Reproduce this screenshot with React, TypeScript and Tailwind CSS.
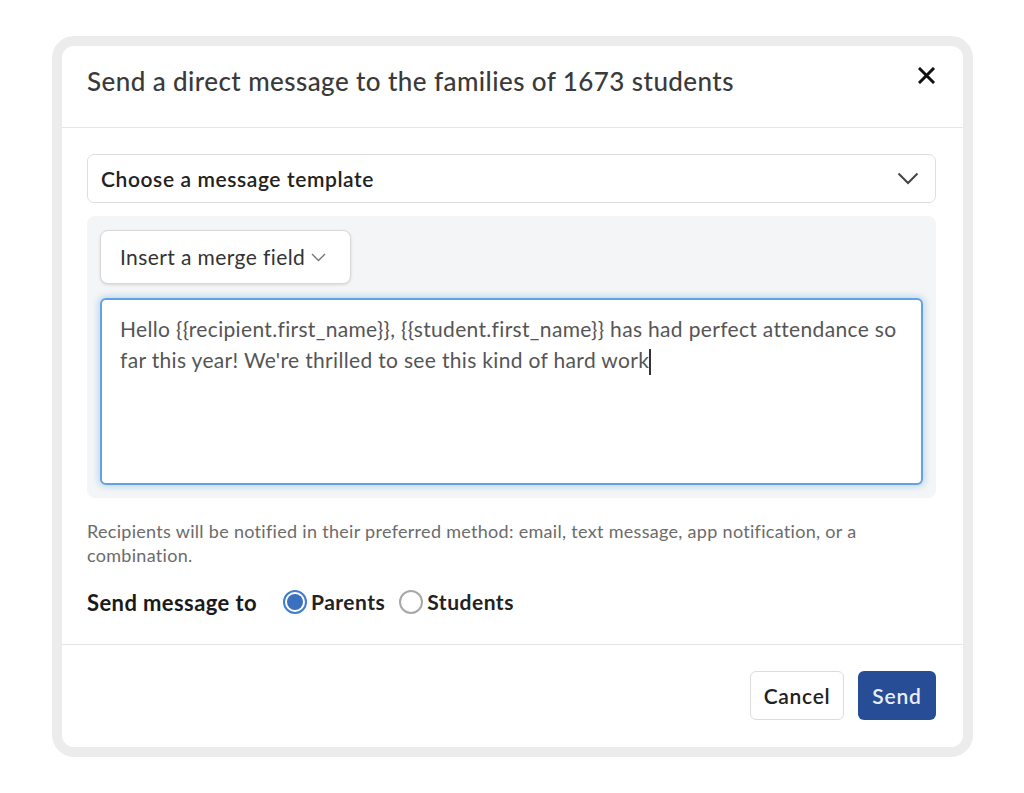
/** Modal: send direct message to families */
export default function App() {
  return (
    <div className="min-h-[793px] w-[1024px] bg-white pt-[36px] pl-[52px]" style={{ fontFamily: "Lato, 'Open Sans', sans-serif" }}>
      <div className="w-[921px] h-[721px] rounded-[22px] border-[10px] border-[#ececec] bg-[#ececec]">
        <div className="h-full rounded-[12px] bg-white flex flex-col overflow-hidden">
          {/* Header */}
          <div className="h-[82px] flex items-start justify-between pl-[25px] pr-[28px] pt-[19px] border-b border-[#e6e6e6] shrink-0">
            <h1 className="text-[26px] leading-[32px] font-medium text-[#3a3a3a] tracking-[0.42px]">
              Send a direct message to the families of 1673 students
            </h1>
            <svg width="17" height="17" viewBox="0 0 17 17" className="mt-[2px]">
              <path d="M2 2 L15 15 M15 2 L2 15" stroke="#111" strokeWidth="3" strokeLinecap="square" />
            </svg>
          </div>

          {/* Body */}
          <div className="pl-[25px] pr-[27px] pt-[26px] pb-[30px] border-b border-[#e6e6e6]">
            <div className="h-[49px] rounded-[7px] border border-[#dedede] flex items-center justify-between pl-[13px] pr-[16px]">
              <span className="text-[21px] font-semibold text-[#222] tracking-[0.6px]">Choose a message template</span>
              <svg width="22" height="13" viewBox="0 0 22 13">
                <polyline points="1.5,1.5 11,11 20.5,1.5" fill="none" stroke="#444" strokeWidth="2" />
              </svg>
            </div>

            <div className="mt-[13px] rounded-[8px] bg-[#f4f5f7] p-[13px] pt-[14px]">
              <div className="w-[251px] h-[54px] rounded-[8px] border border-[#d9d9d9] bg-white shadow-[0_1px_3px_rgba(0,0,0,0.12)] flex items-center pl-[19px] gap-[6px]">
                <span className="text-[21px] text-[#333] tracking-[0.4px]">Insert a merge field</span>
                <svg width="15" height="9" viewBox="0 0 15 9">
                  <polyline points="1,1 7.5,7.5 14,1" fill="none" stroke="#777" strokeWidth="1.4" />
                </svg>
              </div>

              <div className="mt-[14px] h-[187px] rounded-[6px] border-2 border-[#5ea3e3] bg-white shadow-[0_0_6px_2px_rgba(94,163,227,0.35)] pl-[18px] pr-[10px] pt-[13px]">
                <p className="text-[21px] leading-[31px] text-[#555] tracking-[0.33px]">
                  Hello {"{{recipient.first_name}}"}, {"{{student.first_name}}"} has had perfect attendance so far this year! We're thrilled to see this kind of hard work
                  <span className="inline-block w-[1.5px] h-[26px] bg-[#333] align-middle -mt-[2px]" />
                </p>
              </div>
            </div>

            <p className="mt-[21px] text-[18px] leading-[24px] text-[#6b6b6b] tracking-[0.3px]">
              Recipients will be notified in their preferred method: email, text message, app notification, or a combination.
            </p>

            <div className="mt-[23px] flex items-center h-[24px]">
              <span className="text-[22px] font-bold text-[#1a1a1a] w-[196px] tracking-[0.4px]">Send message to</span>
              <label className="flex items-center gap-[4px]">
                <span className="w-[24px] h-[24px] rounded-full border-2 border-[#3f7dd0] flex items-center justify-center">
                  <span className="w-[16px] h-[16px] rounded-full bg-[#3b6fc0]" />
                </span>
                <span className="text-[21px] font-bold text-[#222] tracking-[0.5px]">Parents</span>
              </label>
              <label className="flex items-center gap-[4px] ml-[14px]">
                <span className="w-[24px] h-[24px] rounded-full border-2 border-[#a8a8a8]" />
                <span className="text-[21px] font-bold text-[#222] tracking-[0.5px]">Students</span>
              </label>
            </div>
          </div>

          {/* Footer */}
          <div className="flex justify-end gap-[14px] pt-[26px] pr-[27px]">
            <button className="w-[94px] h-[49px] rounded-[6px] border border-[#dcdcdc] bg-white text-[21px] font-semibold text-[#222] tracking-[0.7px]">
              Cancel
            </button>
            <button className="w-[78px] h-[49px] rounded-[6px] bg-[#264d96] text-[21px] font-semibold text-[#e8eef8] tracking-[0.8px]">
              Send
            </button>
          </div>
        </div>
      </div>
    </div>
  );
}
